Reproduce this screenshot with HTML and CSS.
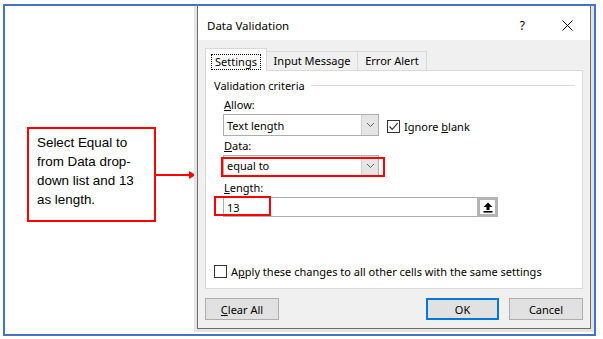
FILE: index.html
```html
<!DOCTYPE html>
<html>
  <head>
    <title>Data Validation</title>
    <link rel="stylesheet" href="styles.css">
  </head>
  <body>
    <div class="frame">
      <div class="note-area">
        <div class="note">Select Equal to from Data drop-down list and 13 as length.</div>
        <svg class="arrow" width="41" height="10" viewBox="0 0 41 10">
          <line x1="0" y1="5" x2="34" y2="5" stroke="#ff0000" stroke-width="2" />
          <polygon points="33,1 40,5 33,9" fill="#ff0000" />
        </svg>
      </div>

      <div class="dialog">
        <div class="title-bar">
          <span class="title">Data Validation</span>
          <span class="help">?</span>
          <svg class="close" width="11" height="11" viewBox="0 0 11 11">
            <path d="M0.5 0.5 L10.5 10.5 M10.5 0.5 L0.5 10.5" stroke="#000" stroke-width="1" />
          </svg>
        </div>

        <div class="dialog-body">
          <div class="tabs">
            <div class="tab active"><span class="focus">Settings</span></div>
            <div class="tab tab-input">Input Message</div>
            <div class="tab tab-error">Error Alert</div>
          </div>

          <div class="panel">
            <div class="group-title">
              <span>Validation criteria</span>
              <span class="rule"></span>
            </div>

            <div class="fields">
              <div class="label"><u>A</u>llow:</div>
              <div class="row">
                <div class="combo">
                  <span class="value">Text length</span>
                  <span class="drop">
                    <svg width="9" height="6" viewBox="0 0 9 6"><path d="M1 1 L4.5 4.5 L8 1" fill="none" stroke="#606060" stroke-width="1" /></svg>
                  </span>
                </div>
                <span class="check checked">
                  <svg width="11" height="11" viewBox="0 0 11 11"><path d="M1.5 5.5 L4.2 8.3 L9.7 2.2" fill="none" stroke="#333" stroke-width="1.2" /></svg>
                </span>
                <span class="check-label">Ignore <u>b</u>lank</span>
              </div>

              <div class="label"><u>D</u>ata:</div>
              <div class="row">
                <div class="combo data-combo">
                  <span class="value">equal to</span>
                  <span class="drop">
                    <svg width="9" height="6" viewBox="0 0 9 6"><path d="M1 1 L4.5 4.5 L8 1" fill="none" stroke="#606060" stroke-width="1" /></svg>
                  </span>
                  <span class="mark mark-data"></span>
                </div>
              </div>

              <div class="label length-label"><u>L</u>ength:</div>
              <div class="row">
                <div class="input">
                  <span class="value">13</span>
                  <span class="picker">
                    <span class="picker-inner">
                      <svg width="10" height="11" viewBox="0 0 10 11"><path d="M5 0.5 L9.5 5 L6.5 5 L6.5 8 L3.5 8 L3.5 5 L0.5 5 Z" fill="#000" /><rect x="0.5" y="9" width="9" height="1.6" fill="#000" /></svg>
                    </span>
                  </span>
                  <span class="mark mark-length"></span>
                </div>
              </div>
            </div>

            <div class="apply">
              <span class="check"></span>
              <span class="check-label">A<u>p</u>ply these changes to all other cells with the same settings</span>
            </div>
          </div>

          <div class="buttons">
            <button class="btn"><u>C</u>lear All</button>
            <span class="spacer"></span>
            <button class="btn default">OK</button>
            <button class="btn">Cancel</button>
          </div>
        </div>
      </div>
    </div>
  </body>
</html>
```

FILE: styles.css
```css
body {
  margin: 0;
  background: #ffffff;
  font-family: "Noto Sans", "Open Sans", sans-serif;
  font-size: 11px;
  color: #000;
}

.frame {
  box-sizing: border-box;
  width: 593px;
  height: 332px;
  margin: 4px 0 0 3px;
  border: 2px solid #4472c4;
  display: flex;
  overflow: hidden;
}

/* left side: the callout and its arrow */
.note-area {
  width: 192px;
  flex: none;
  display: flex;
  align-items: center;
  padding: 120px 0 0 22px;
  box-sizing: border-box;
  align-self: flex-start;
  height: 217px;
}

.note {
  box-sizing: border-box;
  width: 129px;
  height: 95px;
  border: 2px solid #ff0000;
  padding: 4px 4px 0 8px;
  font-family: "Liberation Sans", Arial, sans-serif;
  font-size: 13.4px;
  line-height: 19px;
  color: #000;
}

.arrow {
  flex: none;
  display: block;
}

/* the dialog */
.dialog {
  box-sizing: border-box;
  width: 394px;
  height: 323px;
  flex: none;
  border: 1px solid #6e6e6e;
  border-top: none;
  background: #f0f0f0;
  box-shadow: 0 0 0 3px #e4e4e4;
  display: flex;
  flex-direction: column;
}

.title-bar {
  box-sizing: border-box;
  height: 34px;
  background: #ffffff;
  display: flex;
  align-items: center;
  padding: 4px 17px 0 9px;
  flex: none;
}

.title {
  flex: 1;
  font-size: 11.5px;
}

.help {
  margin-right: 37px;
  font-size: 12px;
}

.dialog-body {
  padding: 8px 7px 0 7px;
  flex: 1;
  display: flex;
  flex-direction: column;
}

.tabs {
  display: flex;
  align-items: flex-end;
  height: 22px;
}

.tab {
  box-sizing: border-box;
  height: 19px;
  border: 1px solid #d9d9d9;
  border-bottom: none;
  line-height: 18px;
  background: #f0f0f0;
  text-align: center;
}

.tab.active {
  width: 62px;
  height: 23px;
  margin-bottom: -1px;
  background: #ffffff;
  padding-top: 4px;
  position: relative;
  z-index: 1;
}

.tab-input {
  width: 92px;
  margin-left: -1px;
}

.tab-error {
  width: 70px;
  margin-left: -1px;
}

.focus {
  display: inline-block;
  outline: 1px dotted #000;
  padding: 0 3px;
  line-height: 14px;
}

.panel {
  box-sizing: border-box;
  height: 219px;
  background: #ffffff;
  border: 1px solid #d9d9d9;
  padding: 6px 7px 0 8px;
  display: flex;
  flex-direction: column;
}

.group-title {
  display: flex;
  align-items: center;
  height: 16px;
}

.rule {
  flex: 1;
  height: 1px;
  background: #dcdcdc;
  margin-left: 6px;
}

.fields {
  padding-left: 9px;
  margin-top: 4px;
}

.label {
  line-height: 16px;
  height: 16px;
  margin-left: 1px;
}

.row {
  display: flex;
  align-items: center;
  margin-top: 1px;
}

.combo {
  box-sizing: border-box;
  width: 156px;
  height: 22px;
  border: 1px solid #adadad;
  display: flex;
  align-items: center;
  position: relative;
  margin-bottom: 2px;
}

.data-combo {
  height: 21px;
  margin-bottom: 4px;
}

.value {
  flex: 1;
  padding-left: 3px;
}

.drop {
  width: 16px;
  align-self: stretch;
  background: #e5e5e5;
  border-left: 1px solid #d0d0d0;
  display: flex;
  align-items: center;
  justify-content: center;
}

.check {
  box-sizing: border-box;
  width: 13px;
  height: 13px;
  border: 1px solid #333;
  background: #fff;
  display: inline-flex;
  align-items: center;
  justify-content: center;
  flex: none;
}

.row .check {
  margin-left: 8px;
}

.check-label {
  margin-left: 4px;
}

.input {
  box-sizing: border-box;
  width: 275px;
  height: 20px;
  border: 1px solid #adadad;
  display: flex;
  align-items: center;
  position: relative;
}

.picker {
  box-sizing: border-box;
  width: 21px;
  align-self: stretch;
  margin: -1px -1px -1px 0;
  border: 3px solid #b4b4b4;
  background: #b4b4b4;
  display: flex;
}

.picker-inner {
  flex: 1;
  background: #ffffff;
  display: flex;
  align-items: center;
  justify-content: center;
}

/* red annotation boxes drawn over the fields */
.mark {
  position: absolute;
  border: 2px solid #ff0000;
  box-sizing: border-box;
}

.mark-data {
  left: -3px;
  top: 1px;
  width: 164px;
  height: 20px;
}

.mark-length {
  left: -10px;
  top: -2px;
  width: 57px;
  height: 20px;
}

.apply {
  display: flex;
  align-items: center;
  margin-top: auto;
  margin-bottom: 9px;
}

.apply .check-label {
  margin-left: 4px;
}

.buttons {
  display: flex;
  margin-top: 9px;
}

.spacer {
  flex: 1;
}

.btn {
  box-sizing: border-box;
  width: 74px;
  height: 22px;
  background: #e1e1e1;
  border: 1px solid #adadad;
  font-family: "Noto Sans", "Open Sans", sans-serif;
  font-size: 11px;
  color: #000;
  padding: 0;
}

.btn.default {
  width: 73px;
  border: 2px solid #0078d7;
  margin-right: 10px;
}
```
